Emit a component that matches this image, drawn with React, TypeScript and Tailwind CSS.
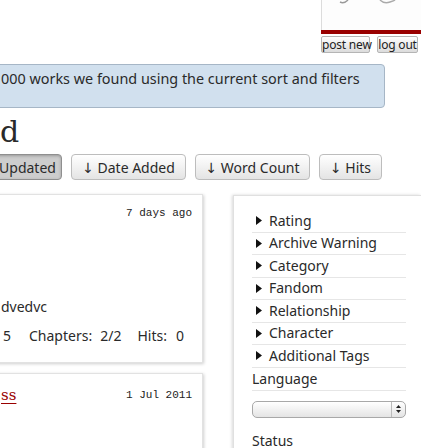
import React from 'react';

const filters = ['Rating', 'Archive Warning', 'Category', 'Fandom', 'Relationship', 'Character', 'Additional Tags'];

const sorts = [
  { label: '↓ Date Added', w: 'w-[115px]' },
  { label: '↓ Word Count', w: 'w-[115px]' },
  { label: '↓ Hits', w: 'w-[63px]' },
];

const Triangle: React.FC = () => (
  <svg width="6" height="9" viewBox="0 0 6 9" className="ml-[4px] shrink-0">
    <path d="M0 0 L6 4.5 L0 9 Z" fill="#111" />
  </svg>
);

const App: React.FC = () => {
  return (
    <div
      className="w-[421px] h-[448px] overflow-hidden bg-white text-[#2a2a2a]"
      style={{ fontFamily: '"Lucida Grande", "Noto Sans", "DejaVu Sans", sans-serif' }}
    >
      {/* header / user box */}
      <div className="flex justify-end">
        <div className="w-[100px]">
          <div className="h-[30px] border-l border-[#dcdcdc] bg-[#fdfdfd]">
            <svg width="99" height="30" viewBox="0 0 99 30">
              <path d="M18 2 Q22 4 26 0" stroke="#999" strokeWidth="1.5" fill="none" />
              <path d="M58 0 Q62 4 68 2 Q72 1 73 0" stroke="#aaa" strokeWidth="1.5" fill="none" />
            </svg>
          </div>
          <div className="h-[4px] bg-[#990000]" />
          <div className="mt-[2px] flex gap-[7px] text-[12px] leading-none whitespace-nowrap tracking-[-0.2px]">
            <button className="w-[49px] h-[17px] rounded-[2px] border border-[#b5b5b5] bg-gradient-to-b from-white to-[#dcdcdc] text-[#222]">
              post new
            </button>
            <button className="w-[41px] h-[17px] rounded-[2px] border border-[#b5b5b5] bg-gradient-to-b from-white to-[#dcdcdc] text-[#222]">
              log out
            </button>
          </div>
        </div>
      </div>

      {/* notice */}
      <div className="mt-[11px] -ml-[8px] w-[393px] h-[44px] rounded-[4px] border border-[#a6b6c6] bg-[#d1e0ee] pl-[8px] pt-[4px] text-[14.4px] leading-[20px] whitespace-nowrap">
        000 works we found using the current sort and filters
      </div>

      {/* heading */}
      <h2
        className="mt-[6px] text-[30px] leading-[36px]"
        style={{ fontFamily: '"DejaVu Serif", Georgia, serif' }}
      >
        d
      </h2>

      {/* sort buttons */}
      <div className="mt-[4px] flex gap-[9px] text-[14px] whitespace-nowrap">
        <button className="-ml-[12px] w-[74px] h-[26px] pl-[5px] rounded-[4px] border border-[#8f8f8f] bg-[#cdcdcd] shadow-[inset_0_1px_3px_#999]">
          Updated
        </button>
        {sorts.map((s) => (
          <button
            key={s.label}
            className={`${s.w} h-[26px] rounded-[4px] border border-[#bdbdbd] bg-gradient-to-b from-white to-[#e4e4e4]`}
          >
            {s.label}
          </button>
        ))}
      </div>

      {/* content */}
      <div className="mt-[14px] flex">
        <div className="w-[203px] shrink-0">
          <div className="-ml-[10px] w-[213px] h-[169px] border border-[#e2e2e2] shadow-[1px_1px_3px_#cfcfcf] pl-[10px] pr-[10px] pt-[12px]">
            <div
              className="text-right text-[11px] leading-[12px] text-[#222]"
              style={{ fontFamily: '"Liberation Mono", monospace' }}
            >
              7 days ago
            </div>
            <p className="mt-[78px] text-[14px] leading-[20px]">dvedvc</p>
            <div className="mt-[9px] flex text-[14px] leading-[20px] pl-[2px]">
              <span>5</span>
              <span className="ml-[18px]">Chapters:</span>
              <span className="ml-[8px]">2/2</span>
              <span className="ml-[16px]">Hits:</span>
              <span className="ml-[9px]">0</span>
            </div>
          </div>
          <div className="mt-[10px] -ml-[10px] w-[213px] h-[120px] border border-[#e2e2e2] shadow-[1px_1px_3px_#cfcfcf] pl-[10px] pr-[10px] pt-[11px]">
            <div className="flex items-center justify-between">
              <a
                className="text-[15px] leading-[20px] text-[#990000] underline underline-offset-[3px]"
                style={{ fontFamily: '"DejaVu Serif", Georgia, serif' }}
              >
                ss
              </a>
              <span
                className="text-[11px] leading-[12px] text-[#222]"
                style={{ fontFamily: '"Liberation Mono", monospace' }}
              >
                1 Jul 2011
              </span>
            </div>
          </div>
        </div>

        {/* filter panel */}
        <div className="ml-[30px] mt-[1px] flex-1 border-l border-t border-[#e0e0e0] shadow-[-1px_0_3px_#d8d8d8] pl-[18px] pr-[15px] pt-[14px] h-[300px] text-[14px]">
          {filters.map((f) => (
            <div key={f} className="flex items-center gap-[7px] h-[22.5px] border-b border-[#e6e6e6]">
              <Triangle />
              <span className="leading-[20px]">{f}</span>
            </div>
          ))}
          <div className="flex items-center h-[23px] border-b border-[#e6e6e6] leading-[20px]">Language</div>
          <div className="mt-[10px] h-[17px] flex rounded-[5px] border border-[#a8a8a8] bg-gradient-to-b from-white to-[#e4e4e4]">
            <div className="flex-1" />
            <div className="w-[14px] border-l border-[#bbb] flex flex-col items-center justify-center gap-[2px]">
              <svg width="5" height="3" viewBox="0 0 5 3"><path d="M0 3 L2.5 0 L5 3 Z" fill="#222" /></svg>
              <svg width="5" height="3" viewBox="0 0 5 3"><path d="M0 0 L2.5 3 L5 0 Z" fill="#222" /></svg>
            </div>
          </div>
          <div className="mt-[13px] leading-[20px]">Status</div>
        </div>
      </div>
    </div>
  );
};

export default App;
